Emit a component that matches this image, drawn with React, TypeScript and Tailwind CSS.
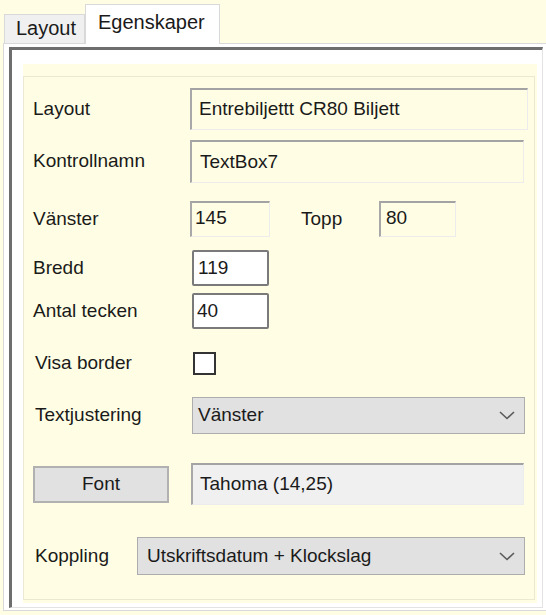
import { ReactNode } from 'react'

const Chevron = () => (
  <svg width="16" height="9" viewBox="0 0 16 9" fill="none">
    <path d="M1 1l7 6.5L15 1" stroke="#5a5a5a" strokeWidth="1.6" />
  </svg>
)

// sunken read-only box (Fixed3D look)
function SunkenBox({ width, height, children, bg = 'bg-[#fffee4]', top = false, pl = 'pl-[7px]' }: {
  width: string
  height: string
  children: ReactNode
  bg?: string
  top?: boolean
  pl?: string
}) {
  return (
    <div
      className={`${width} ${height} ${bg} ${pl} flex ${top ? 'items-start pt-[1px]' : 'items-center'} border-t-2 border-l-2 border-r border-b border-t-[#a3a3a3] border-l-[#a8a8a8] border-r-[#ececec] border-b-[#ececec]`}
    >
      {children}
    </div>
  )
}

function Dropdown({ width, value, pl }: { width: string; value: string; pl: string }) {
  return (
    <div className={`${width} h-full bg-[#e1e1e1] border border-[#adadad] flex items-center justify-between ${pl} pr-[9px]`}>
      <span>{value}</span>
      <Chevron />
    </div>
  )
}

export default function App() {
  return (
    <div className="w-[546px] h-[615px] overflow-hidden bg-[#fffee4] pt-[4px] font-['Liberation_Sans',Arial,sans-serif] text-[19px] text-[#1a1a1a]">
      {/* tab strip */}
      <div className="flex items-end pl-[4px] h-[39px] text-[20px]">
        <div className="w-[81px] h-[29px] bg-[#f0f0f0] border border-b-0 border-[#d9d9d9] pl-[11px] leading-[26px]">
          Layout
        </div>
        <div className="relative z-10 -mb-px w-[135px] h-[40px] bg-white border border-b-0 border-[#d9d9d9] pl-[12px] pt-[6px] leading-[22px]">
          Egenskaper
        </div>
      </div>

      {/* tab page */}
      <div className="ml-[3px] w-[546px] h-[568px] bg-white border border-[#d9d9d9] pt-[3px] pl-[5px]">
        <div className="w-[534px] h-[561px] border-t-[3px] border-l-[3px] border-r border-b border-t-[#6e6e6e] border-l-[#6e6e6e] border-r-[#e3e3e3] border-b-[#e3e3e3] pt-[14px] pl-[11px]">
          <div className="w-[514px] h-[539px] bg-[#fffee4] pt-[12px]">
            <div className="w-[512px] h-[524px] border border-[#ebe9d2] pl-[9px]">
              <div className="mt-[11px] h-[42px] flex items-center">
                <div className="w-[157px]">Layout</div>
                <SunkenBox width="w-[338px]" height="h-full">Entrebiljettt CR80 Biljett</SunkenBox>
              </div>

              <div className="mt-[10px] h-[43px] flex items-center">
                <div className="w-[157px]">Kontrollnamn</div>
                <SunkenBox width="w-[334px]" height="h-full" pl="pl-[8px]">TextBox7</SunkenBox>
              </div>

              <div className="mt-[18px] h-[36px] flex items-center">
                <div className="w-[157px]">Vänster</div>
                <SunkenBox width="w-[80px]" height="h-full" top pl="pl-[3px]">145</SunkenBox>
                <div className="ml-[31px] w-[78px]">Topp</div>
                <SunkenBox width="w-[77px]" height="h-full" top pl="pl-[5px]">80</SunkenBox>
              </div>

              <div className="mt-[13px] h-[36px] flex items-center">
                <div className="w-[159px]">Bredd</div>
                <div className="w-[77px] h-full bg-white border-2 border-[#7a7a7a] rounded-[2px] pl-[4px] flex items-center">119</div>
              </div>

              <div className="mt-[7px] h-[36px] flex items-center">
                <div className="w-[159px]">Antal tecken</div>
                <div className="w-[77px] h-full bg-white border-2 border-[#7a7a7a] rounded-[2px] pl-[3px] flex items-center">40</div>
              </div>

              <div className="mt-[16px] h-[36px] flex items-center pl-[2px]">
                <div className="w-[158px]">Visa border</div>
                <div className="w-[23px] h-[23px] bg-white border-2 border-[#333333]" />
              </div>

              <div className="mt-[16px] h-[37px] flex items-center pl-[2px]">
                <div className="w-[157px]">Textjustering</div>
                <Dropdown width="w-[333px]" value="Vänster" pl="pl-[5px]" />
              </div>

              <div className="mt-[29px] h-[42px] flex items-center">
                <button className="w-[136px] h-[37px] bg-[#e1e1e1] border-2 border-[#b1b1b1]">Font</button>
                <div className="ml-[22px]">
                  <SunkenBox width="w-[333px]" height="h-[42px]" bg="bg-[#f0f0f0]">Tahoma (14,25)</SunkenBox>
                </div>
              </div>

              <div className="mt-[32px] h-[38px] flex items-center pl-[2px]">
                <div className="w-[102px]">Koppling</div>
                <Dropdown width="w-[388px]" value="Utskriftsdatum + Klockslag" pl="pl-[9px]" />
              </div>
            </div>
          </div>
        </div>
      </div>
    </div>
  )
}
